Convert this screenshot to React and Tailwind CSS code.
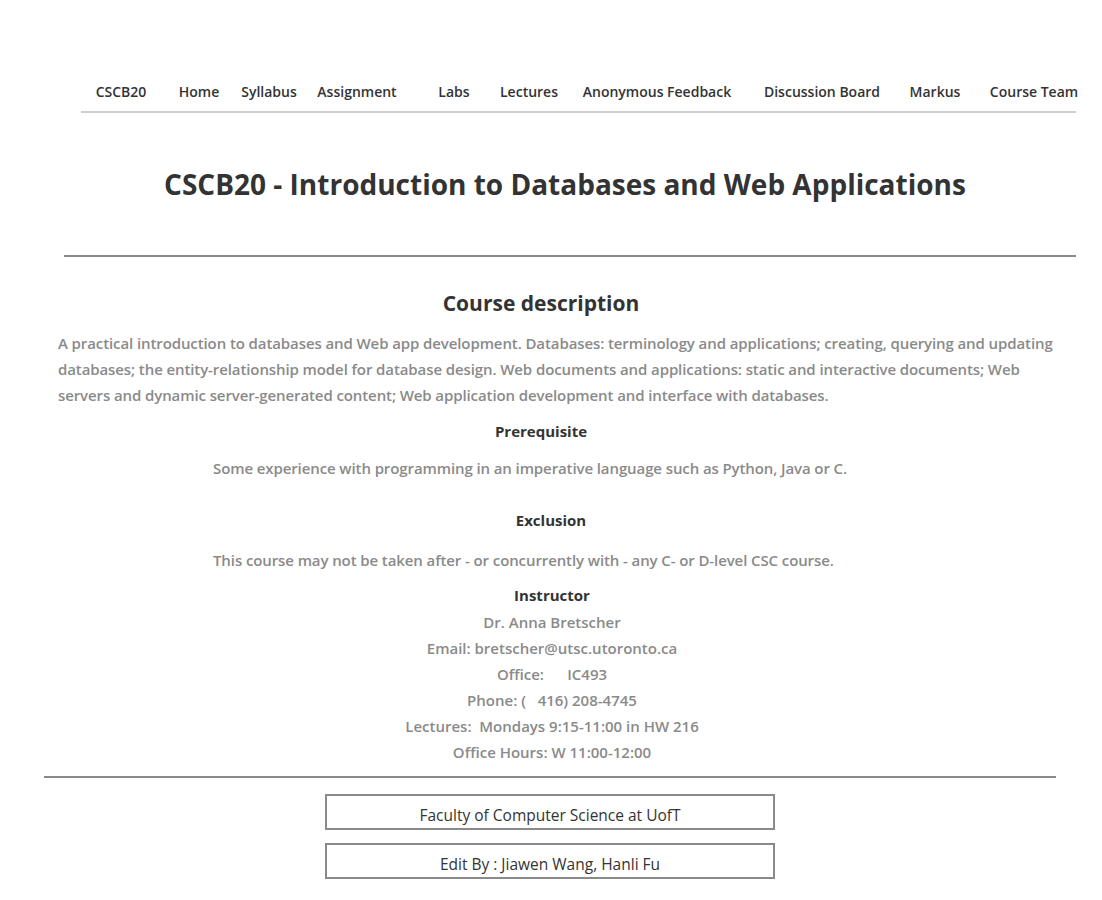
import React from 'react';

const NAV = [
  { label: 'CSCB20', w: 'w-[80px]' },
  { label: 'Home', w: 'w-[76px]' },
  { label: 'Syllabus', w: 'w-[64px]' },
  { label: 'Assignment', w: 'w-[112px]' },
  { label: 'Labs', w: 'w-[82px]' },
  { label: 'Lectures', w: 'w-[68px]' },
  { label: 'Anonymous Feedback', w: 'w-[188px]' },
  { label: 'Discussion Board', w: 'w-[142px]' },
  { label: 'Markus', w: 'w-[84px]' },
  { label: 'Course Team', w: 'w-[114px]' },
];

const INSTRUCTOR = [
  'Dr. Anna Bretscher',
  'Email: bretscher@utsc.utoronto.ca',
  'Office:\u00a0\u00a0\u00a0\u00a0\u00a0 IC493',
  'Phone: (\u00a0\u00a0 416) 208-4745',
  'Lectures:\u00a0 Mondays 9:15-11:00 in HW 216',
  'Office Hours: W 11:00-12:00',
];

export default function App() {
  return (
    <div className="w-[1102px] min-h-[900px] bg-white font-['Open_Sans',sans-serif] text-[#333]">
      {/* nav */}
      <div className="pt-[80px] pl-[81px] pr-[26px]">
        <nav className="flex border-b-2 border-[#cfcfcf] pb-[8px] h-[33px]">
          {NAV.map(n => (
            <a key={n.label} className={`${n.w} shrink-0 text-center text-[14px] font-semibold leading-[24px] whitespace-nowrap text-[#333]`}>
              {n.label}
            </a>
          ))}
        </nav>
      </div>

      {/* title */}
      <div className="pl-[64px] pr-[26px]">
        <div className="border-b-2 border-[#8a8a8a] pt-[51px] h-[144px]">
          <h1 className="text-center text-[28px] font-bold leading-[40px] text-[#333] pr-[10px]">
            CSCB20 - Introduction to Databases and Web Applications
          </h1>
        </div>
      </div>

      {/* description */}
      <div className="pl-[58px] pr-[42px] pt-[32px]">
        <h2 className="text-center text-[21px] font-bold leading-[28px] text-[#333] pr-[36px]">Course description</h2>
        <p className="mt-[13px] text-[15px] font-semibold leading-[26px] text-[#8a8a8a] tracking-[-0.1px]">
          A practical introduction to databases and Web app development. Databases: terminology and applications; creating, querying and updating databases; the entity-relationship model for database design. Web documents and applications: static and interactive documents; Web servers and dynamic server-generated content; Web application development and interface with databases.
        </p>
      </div>

      <div className="pt-[12px]">
        <h3 className="text-center text-[15px] font-bold leading-[22px] pr-[20px] text-[#333]">Prerequisite</h3>
        <p className="pl-[213px] mt-[15px] text-[15px] font-semibold leading-[22px] text-[#8a8a8a] tracking-[-0.1px]">
          Some experience with programming in an imperative language such as Python, Java or C.
        </p>
        <h3 className="mt-[30px] text-center text-[15px] font-bold leading-[22px] text-[#333]">Exclusion</h3>
        <p className="pl-[213px] mt-[18px] text-[15px] font-semibold leading-[22px] text-[#8a8a8a] tracking-[-0.1px]">
          This course may not be taken after - or concurrently with - any C- or D-level CSC course.
        </p>
      </div>

      <div className="pt-[13px] pl-[2px] text-center">
        <h3 className="text-[15px] font-bold leading-[22px] text-[#333]">Instructor</h3>
        <div className="mt-[3px]">
          {INSTRUCTOR.map(line => (
            <p key={line} className="text-[15px] font-semibold leading-[26px] text-[#8a8a8a] whitespace-pre">{line}</p>
          ))}
        </div>
      </div>

      {/* footer */}
      <div className="pl-[44px] pr-[46px] mt-[11px]">
        <div className="border-t-2 border-[#8a8a8a]" />
      </div>
      <div className="flex flex-col items-center gap-[13px] pt-[16px] pb-[20px] pr-[2px]">
        <div className="w-[450px] h-[36px] border-2 border-[#8a8a8a] flex items-center justify-center pt-[7px] text-[15.5px] text-[#333]">
          Faculty of Computer Science at UofT
        </div>
        <div className="w-[450px] h-[36px] border-2 border-[#8a8a8a] flex items-center justify-center pt-[7px] text-[15.5px] text-[#333]">
          Edit By : Jiawen Wang, Hanli Fu
        </div>
      </div>
    </div>
  );
}
